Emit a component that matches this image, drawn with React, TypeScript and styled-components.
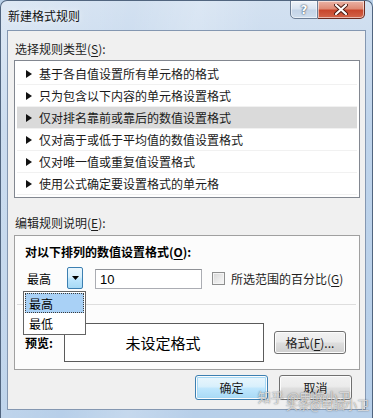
import React from "react";
import styled, { createGlobalStyle } from "styled-components";

const GlobalStyle = createGlobalStyle({
  "html, body": {
    margin: 0,
    padding: 0,
    background: "#b9d0e8"
  },
  body: {
    fontFamily: '"Noto Sans CJK SC", "Noto Sans", sans-serif',
    fontSize: "12px",
    color: "#000"
  }
});

const Frame = styled.div({
  position: "relative",
  width: 373,
  height: 418,
  boxSizing: "border-box",
  display: "flex",
  flexDirection: "column",
  padding: "0 6px 8px 6px",
  border: "1px solid #51657f",
  borderBottom: "none",
  borderRadius: "7px 7px 0 0",
  background:
    "linear-gradient(100deg, rgba(255,255,255,0.25) 0%, rgba(255,255,255,0) 30%, rgba(255,255,255,0.2) 45%, rgba(255,255,255,0) 60%), linear-gradient(180deg, #d3e1f1 0%, #bfd4eb 30%, #b7cfe9 100%)",
  overflow: "hidden"
});

const TitleBar = styled.div({
  height: 29,
  display: "flex",
  alignItems: "flex-start",
  justifyContent: "space-between"
});

const Title = styled.div({
  lineHeight: "30px",
  paddingLeft: 1,
  fontSize: 12,
  color: "#111",
  textShadow: "0 0 6px rgba(255,255,255,0.9)"
});

const CaptionButtons = styled.div({
  display: "flex",
  marginTop: -1,
  marginRight: 1
});

const CaptionButton = styled.div<{ $close?: boolean }>(({ $close }) => ({
  width: $close ? 47 : 28,
  height: 19,
  boxSizing: "border-box",
  display: "flex",
  alignItems: "center",
  justifyContent: "center",
  border: `1px solid ${$close ? "#6b2b20" : "#6e7f96"}`,
  borderLeftWidth: $close ? 0 : 1,
  borderRadius: $close ? "0 0 5px 0" : "0 0 0 5px",
  background: $close
    ? "linear-gradient(180deg, #eab3a6 0%, #de8b76 45%, #c8462c 55%, #d2654a 100%)"
    : "linear-gradient(180deg, #f0f4f9 0%, #d9e4f1 45%, #c4d4e7 55%, #d0deee 100%)",
  boxShadow: "inset 0 0 0 1px rgba(255,255,255,0.55)",
  color: "#fff",
  fontFamily: '"DejaVu Sans", sans-serif',
  fontWeight: 700,
  fontSize: 12
}));

const HelpGlyph = styled.span({
  color: "#fff",
  textShadow: "0 0 1px #3d4b5e, 0 0 2px #3d4b5e",
  lineHeight: "16px"
});

const Client = styled.div({
  flex: 1,
  boxSizing: "border-box",
  border: "1px solid #8497b1",
  background: "#f0f0f0",
  display: "flex",
  flexDirection: "column",
  padding: "10px 5px 0 6px"
});

const SectionLabel = styled.div<{ $top?: number; $bottom?: number }>(
  ({ $top = 0, $bottom = 0 }) => ({
    height: 16,
    lineHeight: "16px",
    marginLeft: 1,
    marginTop: $top,
    marginBottom: $bottom,
    color: "#1e1e1e"
  })
);

const Key = styled.u({
  textUnderlineOffset: 2
});

const RuleList = styled.div({
  height: 138,
  boxSizing: "border-box",
  border: "1px solid #828790",
  background: "#fff",
  padding: "2px 2px"
});

const RuleRow = styled.div<{ $selected?: boolean }>(({ $selected }) => ({
  height: 22,
  boxSizing: "border-box",
  display: "flex",
  alignItems: "center",
  gap: 7,
  paddingLeft: 9,
  borderBottom: "1px solid #f1f1f1",
  background: $selected ? "#dadada" : "transparent",
  color: "#1a1a1a"
}));

const Arrow = styled.svg({
  width: 6,
  height: 8,
  flexShrink: 0
});

const RuleBox = styled.div({
  height: 135,
  boxSizing: "border-box",
  border: "1px solid #a0a0a0",
  background: "#fcfcfc",
  display: "flex",
  flexDirection: "column",
  paddingTop: 8
});

const Heading = styled.div({
  marginLeft: 10,
  height: 16,
  lineHeight: "16px",
  fontWeight: 700
});

const ControlsRow = styled.div({
  marginTop: 7,
  paddingLeft: 7,
  height: 22,
  display: "flex",
  alignItems: "center"
});

const Combo = styled.div({
  position: "relative",
  width: 61,
  height: 22,
  display: "flex",
  alignItems: "center",
  justifyContent: "space-between",
  paddingLeft: 5,
  boxSizing: "border-box",
  zIndex: 2
});

const ComboArrow = styled.div({
  width: 16,
  height: 22,
  boxSizing: "border-box",
  border: "1px solid #3c7fb1",
  borderRadius: 2,
  background: "linear-gradient(180deg, #eaf6fd 0%, #d9f0fc 45%, #bee6fd 55%, #a7d9f5 100%)",
  display: "flex",
  alignItems: "center",
  justifyContent: "center"
});

const DropList = styled.div({
  position: "absolute",
  top: 24,
  left: 1,
  width: 63,
  boxSizing: "border-box",
  border: "1px solid #646464",
  background: "#fff",
  padding: 1
});

const DropItem = styled.div<{ $active?: boolean }>(({ $active }) => ({
  height: 20,
  lineHeight: "20px",
  paddingLeft: 3,
  boxSizing: "border-box",
  border: $active ? "1px dotted #3a3a3a" : "1px solid transparent",
  background: $active ? "#a9d1f6" : "transparent"
}));

const TextField = styled.div({
  marginLeft: 12,
  width: 107,
  height: 20,
  boxSizing: "border-box",
  border: "1px solid #abadb3",
  borderTopColor: "#8f9196",
  background: "#fff",
  paddingLeft: 4,
  fontFamily: '"Liberation Sans", Arial, sans-serif',
  fontSize: 13,
  lineHeight: "20px",
  marginTop: 2
});

const Check = styled.div({
  marginLeft: 10,
  width: 13,
  height: 13,
  boxSizing: "border-box",
  border: "1px solid #8e8f8f",
  background: "linear-gradient(135deg, #d6d6d6 0%, #ececec 60%, #f6f6f6 100%)",
  boxShadow: "inset 0 0 0 1px #f4f4f4"
});

const CheckLabel = styled.div({
  marginLeft: 6,
  color: "#1e1e1e"
});

const Divider = styled.div({
  margin: "15px 3px 0 2px",
  height: 1,
  background: "#dedede"
});

const PreviewRow = styled.div({
  marginTop: 18,
  display: "flex",
  alignItems: "flex-start"
});

const PreviewLabel = styled.div({
  width: 49,
  paddingLeft: 10,
  boxSizing: "border-box",
  lineHeight: "40px",
  fontWeight: 700
});

const PreviewBox = styled.div({
  width: 200,
  height: 39,
  boxSizing: "border-box",
  border: "1px solid #5a5a5a",
  background: "#fff",
  display: "flex",
  alignItems: "center",
  justifyContent: "center",
  fontSize: 15,
  paddingRight: 2
});

const Button = styled.div<{ $focused?: boolean; $w?: number }>(
  ({ $focused, $w = 73 }) => ({
    width: $w,
    height: 25,
    boxSizing: "border-box",
    display: "flex",
    alignItems: "center",
    justifyContent: "center",
    borderRadius: 3,
    border: `1px solid ${$focused ? "#3c7fb1" : "#707070"}`,
    background: $focused
      ? "linear-gradient(180deg, #eaf6fd 0%, #d9f0fc 45%, #bee6fd 55%, #a7d9f5 100%)"
      : "linear-gradient(180deg, #f2f2f2 0%, #ebebeb 45%, #dddddd 55%, #cfcfcf 100%)",
    boxShadow: $focused
      ? "inset 0 0 0 1px #fcfcfc, inset 0 0 0 2px #a7d9f5"
      : "inset 0 0 0 1px #fcfcfc",
    color: "#1a1a1a"
  })
);

const FormatButton = styled(Button)({
  marginLeft: 10,
  marginTop: 8,
  height: 23
});

const FooterRow = styled.div({
  marginTop: 5,
  marginRight: 8,
  display: "flex",
  justifyContent: "flex-end",
  gap: 11
});

const Watermark = styled.div({
  position: "absolute",
  right: 3,
  bottom: 7,
  display: "flex",
  flexDirection: "column",
  alignItems: "flex-end",
  pointerEvents: "none",
  color: "rgba(255,255,255,0.7)",
  textShadow: "0 0 1px rgba(60,60,60,0.6), 0 0 2px rgba(60,60,60,0.35)",
  lineHeight: 1
});

const WatermarkTop = styled.span({
  fontSize: 13,
  marginRight: 18
});

const WatermarkBottom = styled.span({
  fontSize: 12,
  marginTop: -4
});

const rules = [
  "基于各自值设置所有单元格的格式",
  "只为包含以下内容的单元格设置格式",
  "仅对排名靠前或靠后的数值设置格式",
  "仅对高于或低于平均值的数值设置格式",
  "仅对唯一值或重复值设置格式",
  "使用公式确定要设置格式的单元格"
];

const App = () => {
  return (
    <>
      <GlobalStyle />
      <Frame>
        <TitleBar>
          <Title>新建格式规则</Title>
          <CaptionButtons>
            <CaptionButton>
              <HelpGlyph>?</HelpGlyph>
            </CaptionButton>
            <CaptionButton $close>
              <svg width="14" height="11" viewBox="0 0 14 11">
                <path
                  d="M2 1 L12 10 M12 1 L2 10"
                  stroke="#4a1a12"
                  strokeWidth="4"
                  strokeLinecap="round"
                />
                <path
                  d="M2 1 L12 10 M12 1 L2 10"
                  stroke="#fff"
                  strokeWidth="2.2"
                  strokeLinecap="round"
                />
              </svg>
            </CaptionButton>
          </CaptionButtons>
        </TitleBar>
        <Client>
          <SectionLabel $bottom={3}>
            选择规则类型(<Key>S</Key>):
          </SectionLabel>
          <RuleList>
            {rules.map((r, i) => (
              <RuleRow key={r} $selected={i === 2}>
                <Arrow viewBox="0 0 6 8">
                  <path d="M0 0 L6 4 L0 8 Z" fill="#111" />
                </Arrow>
                {r}
              </RuleRow>
            ))}
          </RuleList>
          <SectionLabel $top={17} $bottom={4}>
            编辑规则说明(<Key>E</Key>):
          </SectionLabel>
          <RuleBox>
            <Heading>
              对以下排列的数值设置格式(<Key>O</Key>):
            </Heading>
            <ControlsRow>
              <Combo>
                最高
                <ComboArrow>
                  <svg width="7" height="4" viewBox="0 0 7 4">
                    <path d="M0 0 L7 0 L3.5 4 Z" fill="#000" />
                  </svg>
                </ComboArrow>
                <DropList>
                  <DropItem $active>最高</DropItem>
                  <DropItem>最低</DropItem>
                </DropList>
              </Combo>
              <TextField>10</TextField>
              <Check />
              <CheckLabel>
                所选范围的百分比(<Key>G</Key>)
              </CheckLabel>
            </ControlsRow>
            <Divider />
            <PreviewRow>
              <PreviewLabel>预览:</PreviewLabel>
              <PreviewBox>未设定格式</PreviewBox>
              <FormatButton $w={72}>
                格式(<Key>F</Key>)...
              </FormatButton>
            </PreviewRow>
          </RuleBox>
          <FooterRow>
            <Button $focused>确定</Button>
            <Button>取消</Button>
          </FooterRow>
        </Client>
        <Watermark>
          <WatermarkTop>知乎 @电脑小卫</WatermarkTop>
          <WatermarkBottom>头条@电脑小卫</WatermarkBottom>
        </Watermark>
      </Frame>
    </>
  );
};

export default App;
